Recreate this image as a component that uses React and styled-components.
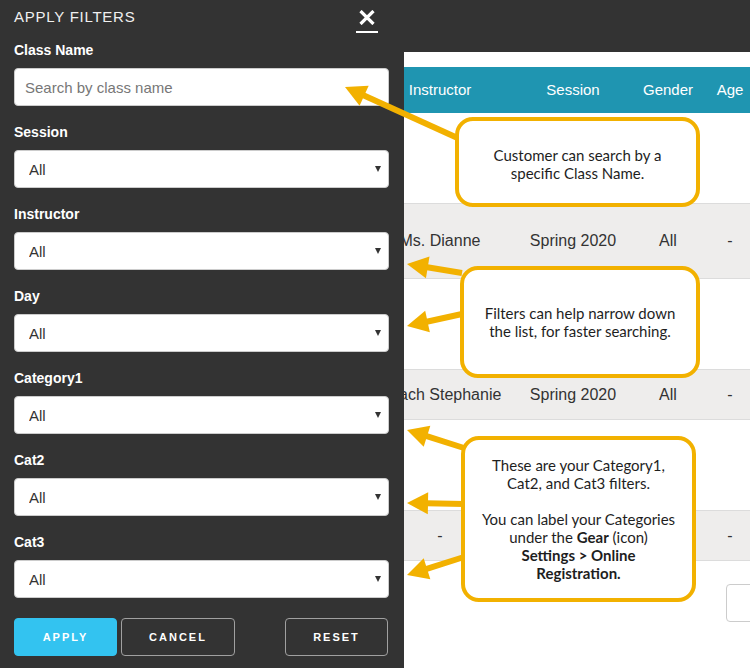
import React from 'react';
import styled, { createGlobalStyle } from 'styled-components';

const GlobalStyle = createGlobalStyle`
  html, body {
    margin: 0;
    padding: 0;
    background: #ffffff;
    overflow: hidden;
  }
  * {
    box-sizing: border-box;
  }
`;

const Page = styled.div`
  position: relative;
  width: 750px;
  height: 668px;
  overflow: hidden;
  font-family: 'Liberation Sans', Arial, sans-serif;
  background: #ffffff;
`;

const TopBar = styled.div`
  height: 52px;
  background: #333333;
`;

const Content = styled.div`
  padding-top: 15px;
`;

const Grid = styled.div`
  display: grid;
  grid-template-columns: 370px 140px 126px 64px 60px;
  width: 760px;
`;

const HeadCell = styled.div`
  height: 46px;
  display: flex;
  align-items: center;
  justify-content: center;
  background: #1f95b1;
  color: #ffffff;
  font-size: 15px;
  white-space: nowrap;
  padding-bottom: 1px;
`;

const Cell = styled.div`
  height: ${(p) => p.$h}px;
  display: flex;
  align-items: center;
  justify-content: center;
  background: ${(p) => (p.$shade ? '#eeedec' : '#ffffff')};
  border-bottom: 1px solid #dcdcdc;
  color: #333333;
  font-size: 16px;
  white-space: nowrap;
`;

const PageButton = styled.div`
  margin: 23px 0 0 726px;
  width: 60px;
  height: 38px;
  border: 1px solid #cccccc;
  border-radius: 4px;
`;

/* the filter drawer lies over the page */
const Drawer = styled.aside`
  position: absolute;
  left: 0;
  top: 0;
  width: 404px;
  height: 668px;
  background: #333333;
  padding: 0 15px 0 14px;
  display: flex;
  flex-direction: column;
  z-index: 2;
`;

const DrawerHead = styled.div`
  height: 34px;
  display: flex;
  align-items: center;
  justify-content: space-between;
`;

const Title = styled.h2`
  margin: 0 0 1px;
  font-size: 15px;
  font-weight: normal;
  letter-spacing: 0.75px;
  color: #f0f0f0;
`;

const Close = styled.button`
  margin: 6px 11px 0 0;
  padding: 2px 3px 6px;
  background: none;
  border: none;
  border-bottom: 2.5px solid #ffffff;
  display: flex;
  cursor: pointer;
`;

const Group = styled.div`
  margin-top: 8px;
  margin-bottom: 10px;
`;

const Label = styled.label`
  display: block;
  font-size: 14px;
  font-weight: bold;
  color: #ffffff;
  line-height: 16px;
  margin-bottom: 10px;
`;

const Input = styled.input`
  width: 100%;
  height: 38px;
  border: 1px solid #cccccc;
  border-radius: 4px;
  padding: 0 10px;
  font-family: 'Liberation Sans', Arial, sans-serif;
  font-size: 15px;
  color: #333333;
  outline: none;

  &::placeholder {
    color: #777777;
  }
`;

const SelectWrap = styled.div`
  position: relative;

  &::after {
    content: '';
    position: absolute;
    right: 8px;
    top: 16px;
    border-left: 3.5px solid transparent;
    border-right: 3.5px solid transparent;
    border-top: 6px solid #333333;
    pointer-events: none;
  }
`;

const Select = styled.select`
  width: 100%;
  height: 38px;
  appearance: none;
  border: 1px solid #cccccc;
  border-radius: 4px;
  padding: 0 14px;
  background: #ffffff;
  font-family: 'Liberation Sans', Arial, sans-serif;
  font-size: 15px;
  color: #333333;
  outline: none;
`;

const Actions = styled.div`
  margin-top: 10px;
  display: flex;
  justify-content: space-between;
`;

const Pair = styled.div`
  display: flex;
  gap: 4px;
`;

const Btn = styled.button`
  height: 38px;
  width: ${(p) => p.$w}px;
  margin-right: ${(p) => p.$mr || 0}px;
  border-radius: 4px;
  border: 1px solid ${(p) => (p.$primary ? '#33c3f0' : '#a0a0a0')};
  background: ${(p) => (p.$primary ? '#33c3f0' : 'transparent')};
  color: #ffffff;
  font-family: 'Liberation Sans', Arial, sans-serif;
  font-size: 11px;
  font-weight: bold;
  letter-spacing: 2px;
  cursor: pointer;
`;

/* annotation layer */
const Arrows = styled.svg`
  position: absolute;
  left: 0;
  top: 0;
  z-index: 3;
  pointer-events: none;
`;

const Callout = styled.div`
  position: absolute;
  left: ${(p) => p.$x}px;
  top: ${(p) => p.$y}px;
  width: ${(p) => p.$w}px;
  height: ${(p) => p.$h}px;
  z-index: 4;
  background: #ffffff;
  border: 4px solid #f2b100;
  border-radius: 18px;
  display: flex;
  align-items: center;
  justify-content: center;
  text-align: center;
  font-family: Lato, 'Open Sans', sans-serif;
  font-size: 15px;
  line-height: 18px;
  color: #1e1e1e;
  padding-top: ${(p) => p.$pt || 0}px;
`;

const filters = ['Session', 'Instructor', 'Day', 'Category1', 'Cat2', 'Cat3'];

const rows = [
  { h: 91, shade: false, cells: ['', '', '', '', ''] },
  { h: 75, shade: true, cells: ['', 'Ms. Dianne', 'Spring 2020', 'All', '-'] },
  { h: 91, shade: false, cells: ['', '', '', '', ''] },
  { h: 50, shade: true, cells: ['', 'Coach Stephanie', 'Spring 2020', 'All', '-'] },
  { h: 91, shade: false, cells: ['', '', '', '', ''] },
  { h: 50, shade: true, cells: ['', '-', '', '', '-'] },
];

const arrows = [
  [462, 140, 345, 87],
  [462, 273, 407, 264],
  [462, 314, 407, 326],
  [464, 448, 407, 430],
  [464, 504, 407, 503],
  [464, 557, 407, 575],
];

function Arrow({ x1, y1, x2, y2 }) {
  const dx = x2 - x1;
  const dy = y2 - y1;
  const len = Math.hypot(dx, dy);
  const ux = dx / len;
  const uy = dy / len;
  const headLen = 21;
  const half = 11;
  const bx = x2 - ux * headLen;
  const by = y2 - uy * headLen;
  const pts = [
    `${x2},${y2}`,
    `${bx - uy * half},${by + ux * half}`,
    `${bx + uy * half},${by - ux * half}`,
  ].join(' ');
  return (
    <g>
      <line x1={x1} y1={y1} x2={bx + ux * 2} y2={by + uy * 2} stroke="#f2b100" strokeWidth="6" />
      <polygon points={pts} fill="#f2b100" />
    </g>
  );
}

const App = () => {
  return (
    <>
      <GlobalStyle />
      <Page>
        <TopBar />
        <Content>
          <Grid>
            <HeadCell>Class</HeadCell>
            <HeadCell>Instructor</HeadCell>
            <HeadCell>Session</HeadCell>
            <HeadCell>Gender</HeadCell>
            <HeadCell>Age</HeadCell>
            {rows.map((r, i) =>
              r.cells.map((c, j) => (
                <Cell key={`${i}-${j}`} $h={r.h} $shade={r.shade}>
                  {c}
                </Cell>
              ))
            )}
          </Grid>
          <PageButton />
        </Content>

        <Drawer>
          <DrawerHead>
            <Title>APPLY FILTERS</Title>
            <Close aria-label="close">
              <svg width="16" height="15" viewBox="0 0 16 15">
                <path d="M1.5 1 L14.5 14 M14.5 1 L1.5 14" stroke="#ffffff" strokeWidth="3.2" />
              </svg>
            </Close>
          </DrawerHead>
          <Group>
            <Label>Class Name</Label>
            <Input placeholder="Search by class name" />
          </Group>
          {filters.map((f) => (
            <Group key={f}>
              <Label>{f}</Label>
              <SelectWrap>
                <Select defaultValue="All">
                  <option>All</option>
                </Select>
              </SelectWrap>
            </Group>
          ))}
          <Actions>
            <Pair>
              <Btn $primary $w={103}>APPLY</Btn>
              <Btn $w={114}>CANCEL</Btn>
            </Pair>
            <Btn $w={103} $mr={1}>RESET</Btn>
          </Actions>
        </Drawer>

        <Arrows width="750" height="668">
          {arrows.map(([x1, y1, x2, y2], i) => (
            <Arrow key={i} x1={x1} y1={y1} x2={x2} y2={y2} />
          ))}
        </Arrows>

        <Callout $x={455} $y={117} $w={245} $h={90} $pt={4}>
          <div>
            Customer can search by a
            <br />
            specific Class Name.
          </div>
        </Callout>
        <Callout $x={460} $y={266} $w={240} $h={112}>
          <div>
            Filters can help narrow down
            <br />
            the list, for faster searching.
          </div>
        </Callout>
        <Callout $x={461} $y={436} $w={235} $h={166}>
          <div>
            These are your Category1,
            <br />
            Cat2, and Cat3 filters.
            <br />
            <br />
            You can label your Categories
            <br />
            under the <b>Gear</b> (icon)
            <br />
            <b>Settings &gt; Online</b>
            <br />
            <b>Registration.</b>
          </div>
        </Callout>
      </Page>
    </>
  );
};

export default App;
